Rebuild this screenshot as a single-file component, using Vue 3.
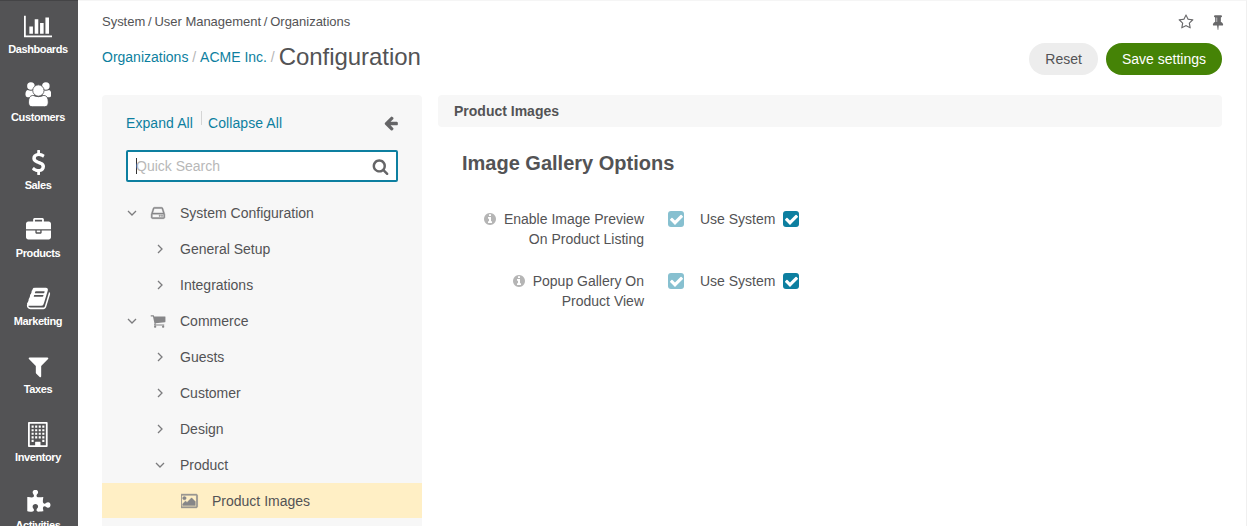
<script setup>
import { h } from 'vue'

const icons = {
  chart: { w: 2048, d: 'M640 896v512h-256v-512h256zm384-512v1024h-256v-1024h256zm1024 1152v128h-2048v-1536h128v1408h1920zm-640-896v768h-256v-768h256zm384-384v1152h-256v-1152h256z' },
  dollar: { w: 1792, d: 'M1362 1185q0 153-99.500 263.500t-258.500 136.500v175q0 14-9 23t-23 9h-135q-13 0-22.500-9.500t-9.500-22.500v-175q-66-9-127.500-31t-101.500-44.500-74-48-46.500-37.500-17.500-18q-17-21-2-41l103-135q7-10 23-12 15-2 24 9l2 2q113 99 243 125 37 8 74 8 81 0 142.500-43t61.500-122q0-28-15-53t-33.500-42-58.500-37.500-66-32-80-32.500q-39-16-61.500-25t-61.500-26.500-62.500-31-56.500-35.500-53.500-42.500-43.500-49-35.500-58-21-66.500-8.500-78q0-138 98-242t255-134v-180q0-13 9.500-22.500t22.500-9.500h135q14 0 23 9t9 23v176q57 6 110.500 23t87 33.500 63.500 37.500 39 29 15 14q17 18 5 38l-81 146q-8 15-23 16-14 3-27-7-3-3-14.500-12t-39-26.500-58.500-32-74.500-26-85.500-11.500q-95 0-155 43t-60 111q0 26 8.500 48t29.500 41.500 39.500 33 56 31 60.500 27 70 27.500q53 20 81 31.500t76 35 75.500 42.500 62 50 53 63.500 31.500 76.500 13 94z' },
  briefcase: { w: 1792, d: 'M640 256h512v-128h-512v128zm1152 640v480q0 66-47 113t-113 47h-1472q-66 0-113-47t-47-113v-480h672v160q0 26 19 45t45 19h320q26 0 45-19t19-45v-160h672zm-768 0v128h-256v-128h256zm768-480v384h-1792v-384q0-66 47-113t113-47h352v-160q0-40 28-68t68-28h576q40 0 68 28t28 68v160h352q66 0 113 47t47 113z' },
  book: { w: 1792, d: 'M1703 478q40 57 18 129l-275 906q-19 64-76.500 107.500t-122.500 43.500h-923q-77 0-148.500-53.500t-99.500-131.500q-24-67-2-127 0-4 3-27t4-37q1-8-3-21.500t-3-19.500q2-11 8-21t16.500-23.500 16.500-23.500q23-38 45-91.500t30-91.500q3-10 .5-30t-.5-28q3-11 17-28t17-23q21-36 42-92t25-90q1-9-2.500-32t.5-28q4-13 22-30.500t22-22.500q19-26 42.500-84.500t27.500-96.500q1-8-3-25.500t-2-26.500q2-8 9-18t18-23 17-21q8-12 16.500-30.500t15-35 16-36 19.500-32 26.500-23.500 36-11.500 47.500 5.500l-1 3q38-9 51-9h761q74 0 114 56t18 130l-274 906q-36 119-71.500 153.500t-128.500 34.500h-869q-27 0-38 15-11 16-1 43 24 70 144 70h923q29 0 56-15.500t35-41.500l300-987q7-22 5-57 38 15 59 43zm-1064 2q-4 13 2 22.500t20 9.500h608q13 0 25.500-9.500t16.500-22.500l21-64q4-13-2-22.500t-20-9.500h-608q-13 0-25.500 9.500t-16.500 22.500zm-83 256q-4 13 2 22.500t20 9.500h608q13 0 25.500-9.500t16.500-22.500l21-64q4-13-2-22.500t-20-9.500h-608q-13 0-25.500 9.500t-16.500 22.500z' },
  filter: { w: 1792, d: 'M1595 295q17 41-14 70l-493 493v742q0 42-39 59-13 5-25 5-27 0-45-19l-256-256q-19-19-19-45v-486l-493-493q-31-29-14-70 17-39 59-39h1280q42 0 59 39z' },
  building: { w: 1408, d: 'M64 0h1280q26 0 45 19t19 45v1664q0 26-19 45t-45 19h-1280q-26 0-45-19t-19-45v-1664q0-26 19-45t45-19zM128 128v1536h384v-224q0-32 32-32h320q32 0 32 32v224h384v-1536zM256 256h150v150h-150zM512 256h150v150h-150zM768 256h150v150h-150zM1024 256h150v150h-150zM256 512h150v150h-150zM512 512h150v150h-150zM768 512h150v150h-150zM1024 512h150v150h-150zM256 768h150v150h-150zM512 768h150v150h-150zM768 768h150v150h-150zM1024 768h150v150h-150zM256 1024h150v150h-150zM512 1024h150v150h-150zM768 1024h150v150h-150zM1024 1024h150v150h-150zM256 1280h150v150h-150zM1024 1280h150v150h-150z' },
  puzzle: { w: 1792, d: 'M1755 1083q0 81-44.500 135t-123.500 54q-41 0-77.500-17.500t-59-38-56.500-38-71-17.500q-110 0-110 124 0 39 16 115t15 115v5q-22 0-33 1-34 3-97.500 11.500t-115.500 13.500-98 5q-61 0-103-26.500t-42-83.500q0-37 17.500-71t38-56.500 38-59 17.500-77.500q0-79-54-123.500t-135-44.500q-84 0-143 45.500t-59 127.500q0 43 15 83t33.500 64.500 33.500 53 15 50.500q0 45-46 89-37 35-117 35-95 0-245-24-9-2-27.500-4t-27.500-4l-13-2q-1 0-3-1-2 0-2-1v-1024q2 1 17.500 3.500t34 5 21.500 3.500q150 24 245 24 80 0 117-35 46-44 46-89 0-22-15-50.500t-33.500-53-33.500-64.500-15-83q0-82 59-127.500t144-45.500q80 0 134 44.500t54 123.500q0 41-17.500 77.500t-38 59-38 56.500-17.500 71q0 57 42 83.500t103 26.500q64 0 180-15t163-17v2q-1 2-3.500 17.500t-5 34-3.500 21.500q-24 150-24 245 0 80 35 117 44 46 89 46 22 0 50.500-15t53-33.500 64.500-33.500 83-15q82 0 127.500 59t45.500 143z' },
  users: {
    w: 1920,
    d: 'M423 10a270 270 0 1 1 0 540a270 270 0 1 1 0-540zM1497 10a270 270 0 1 1 0 540a270 270 0 1 1 0-540zM190 580q230 110 470 0v510h-480q-150 0-150-190q0-270 160-320zM1730 580q-230 110-470 0v510h480q150 0 150-190q0-270-160-320z',
    front: 'M960 205a405 405 0 1 1 0 810a405 405 0 1 1 0-810zM560 960q400 190 800 0q310 30 310 480q0 330-260 330h-900q-260 0-260-330q0-450 310-480z',
  },
  star: { w: 1792, d: 'M1201 1004l306-297-422-62-189-382-189 382-422 62 306 297-73 421 378-199 377 199zm527-357q0 22-26 48l-363 354 86 500q1 7 1 20 0 50-41 50-19 0-40-12l-449-236-449 236q-22 12-40 12-21 0-31.500-14.500t-10.500-35.500q0-6 2-20l86-500-364-354q-25-27-25-48 0-37 56-46l502-73 225-455q19-41 49-41t49 41l225 455 502 73q56 9 56 46z' },
  pin: { w: 1792, d: 'M800 864v-448q0-14-9-23t-23-9-23 9-9 23v448q0 14 9 23t23 9 23-9 9-23zm672 352q0 26-19 45t-45 19h-429l-51 483q-2 12-10.500 20.500t-20.500 8.500h-1q-27 0-32-27l-76-485h-404q-26 0-45-19t-19-45q0-123 78.500-221.500t177.500-98.500v-512q-52 0-90-38t-38-90 38-90 90-38h640q52 0 90 38t38 90-38 90-90 38v512q99 0 177.500 98.500t78.500 221.500z' },
  search: { w: 1792, d: 'M1216 832q0-185-131.500-316.500t-316.500-131.500-316.500 131.500-131.500 316.500 131.500 316.500 316.500 131.500 316.500-131.500 131.500-316.500zm512 832q0 52-38 90t-90 38q-54 0-90-38l-343-342q-179 124-399 124-143 0-273.500-55.500t-225-150-150-225-55.500-273.500 55.500-273.500 150-225 225-150 273.500-55.500 273.500 55.500 225 150 150 225 55.500 273.500q0 220-124 399l343 343q37 37 37 90z' },
  back: { w: 1792, d: 'M1664 896v128q0 53-32.500 90.500t-84.500 37.500h-704l293 294q38 36 38 90t-38 90l-75 76q-37 37-90 37-52 0-91-37l-651-652q-37-37-37-90 0-52 37-91l651-650q38-38 91-38 52 0 90 38l75 74q38 38 38 91t-38 91l-293 293h704q52 0 84.500 37.500t32.500 90.500z' },
  info: { w: 1792, d: 'M1152 1376v-160q0-14-9-23t-23-9h-96v-512q0-14-9-23t-23-9h-320q-14 0-23 9t-9 23v160q0 14 9 23t23 9h96v320h-96q-14 0-23 9t-9 23v160q0 14 9 23t23 9h448q14 0 23-9t9-23zm-128-896v-160q0-14-9-23t-23-9h-192q-14 0-23 9t-9 23v160q0 14 9 23t23 9h192q14 0 23-9t9-23zm640 416q0 209-103 385.500t-279.500 279.500-385.500 103-385.500-103-279.500-279.500-103-385.500 103-385.500 279.500-279.500 385.500-103 385.500 103 279.500 279.500 103 385.500z' },
  cart: { w: 1792, d: 'M704 1536q0 52-38 90t-90 38-90-38-38-90 38-90 90-38 90 38 38 90zm896 0q0 52-38 90t-90 38-90-38-38-90 38-90 90-38 90 38 38 90zm128-1088v512q0 24-16.500 42.500t-40.500 21.500l-1044 122q13 60 13 70 0 16-24 64h920q26 0 45 19t19 45-19 45-45 19h-1024q-26 0-45-19t-19-45q0-11 8-31.500t16-36 21.500-40 15.500-29.500l-177-823h-204q-26 0-45-19t-19-45 19-45 45-19h256q16 0 28.500 6.500t19.500 15.500 13 24.500 8 26 5.500 29.500 4.500 26h1201q26 0 45 19t19 45z' },
  picture: { w: 1920, d: 'M576 576q0 80-56 136t-136 56-136-56-56-136 56-136 136-56 136 56 56 136zm1024 384v448h-1408v-192l320-320 160 160 512-512zm96-704h-1600q-13 0-22.500 9.500t-9.500 22.500v1216q0 13 9.500 22.500t22.500 9.500h1600q13 0 22.500-9.500t9.500-22.500v-1216q0-13-9.500-22.500t-22.500-9.500zm160 32v1216q0 66-47 113t-113 47h-1600q-66 0-113-47t-47-113v-1216q0-66 47-113t113-47h1600q66 0 113 47t47 113z', weight: 50 },
  drive: { w: 1792, d: 'M1168 1216q0 33-23.500 56.500t-56.500 23.500-56.500-23.500-23.500-56.500 23.500-56.500 56.500-23.500 56.500 23.500 23.500 56.500zm256 0q0 33-23.500 56.500t-56.500 23.500-56.500-23.500-23.500-56.500 23.500-56.500 56.500-23.500 56.500 23.500 23.500 56.500zm112 160v-320q0-13-9.500-22.500t-22.500-9.500h-1216q-13 0-22.500 9.500t-9.500 22.500v320q0 13 9.500 22.500t22.500 9.500h1216q13 0 22.500-9.500t9.500-22.500zm-1230-480h1180l-157-482q-4-13-16-21.500t-26-8.500h-782q-14 0-26 8.500t-16 21.500zm1358 160v320q0 66-47 113t-113 47h-1216q-66 0-113-47t-47-113v-320q0-25 16-75l197-606q17-53 63-86t101-33h782q55 0 101 33t63 86l197 606q16 50 16 75z', weight: 50 },
  check: { w: 1792, d: 'M1671 566q0 40-28 68l-724 724-136 136q-28 28-68 28t-68-28l-136-136-362-362q-28-28-28-68t28-68l136-136q28-28 68-28t68 28l294 295 656-657q28-28 68-28t68 28l136 136q28 28 28 68z' },
}

const Icon = ({ name, size }) => {
  const icon = icons[name]
  const paths = [h('path', { d: icon.d, stroke: 'currentColor', 'stroke-width': icon.weight || 0 })]
  if (icon.front) {
    paths.push(h('path', { d: icon.front, stroke: '#535355', 'stroke-width': 60 }))
  }
  return h('svg', {
    viewBox: `0 0 ${icon.w} 1792`,
    width: (icon.w / 1792) * size,
    height: size,
    fill: 'currentColor',
    'fill-rule': name === 'building' ? 'evenodd' : 'nonzero',
    'aria-hidden': 'true',
  }, paths)
}
Icon.props = ['name', 'size']

const nav = [
  ['chart', 'Dashboards'],
  ['users', 'Customers'],
  ['dollar', 'Sales'],
  ['briefcase', 'Products'],
  ['book', 'Marketing'],
  ['filter', 'Taxes'],
  ['building', 'Inventory'],
  ['puzzle', 'Activities'],
]

const tree = [
  { label: 'System Configuration', level: 0, open: true, icon: 'drive' },
  { label: 'General Setup', level: 1 },
  { label: 'Integrations', level: 1 },
  { label: 'Commerce', level: 0, open: true, icon: 'cart' },
  { label: 'Guests', level: 1 },
  { label: 'Customer', level: 1 },
  { label: 'Design', level: 1 },
  { label: 'Product', level: 1, open: true },
  { label: 'Product Images', level: 2, icon: 'picture', leaf: true },
]

const options = [
  ['Enable Image Preview', 'On Product Listing'],
  ['Popup Gallery On', 'Product View'],
]
</script>

<template>
  <div class="page">
    <nav class="side">
      <a v-for="[icon, label] in nav" :key="label" class="side-item">
        <span class="side-icon"><Icon :name="icon" :size="25" /></span>
        <span class="side-label">{{ label }}</span>
      </a>
    </nav>

    <main class="main">
      <header class="head">
        <div class="head-left">
          <div class="crumbs">
            <span>System</span><i>/</i><span>User Management</span><i>/</i><span>Organizations</span>
          </div>
          <div class="title">
            <a>Organizations</a><i>/</i><a>ACME Inc.</a><i>/</i><h1>Configuration</h1>
          </div>
        </div>
        <div class="head-right">
          <div class="marks">
            <Icon name="star" :size="16" />
            <Icon name="pin" :size="16" />
          </div>
          <div class="buttons">
            <button class="btn">Reset</button>
            <button class="btn primary">Save settings</button>
          </div>
        </div>
      </header>

      <div class="content">
        <aside class="tree">
          <div class="tree-actions">
            <a>Expand All</a><span class="sep"></span><a>Collapse All</a>
            <Icon class="back" name="back" :size="16" />
          </div>
          <div class="search">
            <span class="caret"></span>
            <span class="placeholder">Quick Search</span>
            <Icon name="search" :size="17" />
          </div>
          <div v-for="n in tree" :key="n.label" class="node" :class="['level' + n.level, { active: n.leaf }]">
            <span v-if="!n.leaf" class="chevron">
              <svg width="10" height="10" viewBox="0 0 10 10" fill="none" stroke="currentColor" stroke-width="1.3">
                <path :d="n.open ? 'M1 3l4 4 4-4' : 'M3 1l4 4-4 4'" />
              </svg>
            </span>
            <span v-if="n.icon" class="node-icon"><Icon :name="n.icon" :size="16" /></span>
            <span>{{ n.label }}</span>
          </div>
        </aside>

        <section class="settings">
          <div class="section-bar">Product Images</div>
          <h2>Image Gallery Options</h2>
          <div v-for="lines in options" :key="lines[0]" class="option">
            <div class="option-label">
              <div class="line"><Icon name="info" :size="14" />{{ lines[0] }}</div>
              <div class="line">{{ lines[1] }}</div>
            </div>
            <span class="box disabled"><Icon name="check" :size="15" /></span>
            <span class="use">Use System</span>
            <span class="box"><Icon name="check" :size="15" /></span>
          </div>
        </section>
      </div>
    </main>
  </div>
</template>

<style>
body {
  margin: 0;
  overflow: hidden;
}
</style>

<style scoped>
* {
  box-sizing: border-box;
}
.page {
  display: flex;
  width: 100%;
  height: 526px;
  overflow: hidden;
  background: #fff;
  color: #535355;
  font: 14px/20px "Liberation Sans", Arial, sans-serif;
}
svg {
  display: block;
  flex: none;
}
.side {
  flex: none;
  width: 78px;
  padding-right: 2px;
  background: #535355;
  color: #fff;
  box-shadow: inset 0 1px #444446;
}
.side-item {
  display: flex;
  flex-direction: column;
  align-items: center;
  height: 68px;
  padding-top: 14px;
}
.side-icon {
  height: 28px;
}
.side-label {
  height: 14px;
  font-size: 11px;
  line-height: 14px;
  font-weight: 700;
  letter-spacing: -0.4px;
  white-space: nowrap;
}
.main {
  flex: 1;
  min-width: 0;
  padding: 0 24px;
  border-top: 1px solid #f5f5f5;
  border-right: 1px solid #f0f0f0;
}
.head {
  display: flex;
  justify-content: space-between;
  height: 94px;
}
.crumbs {
  display: flex;
  padding-top: 11px;
  font-size: 13px;
  line-height: 20px;
  letter-spacing: -0.02px;
}
.crumbs i {
  font-style: normal;
  margin: 0 2.8px;
}
.title {
  display: flex;
  height: 30px;
  margin-top: 10px;
  line-height: 30px;
}
.title a,
.tree-actions a {
  color: #0d7fa0;
}
.title i {
  margin: 0 3.9px;
  color: #b5b5b5;
  font-style: normal;
}
h1 {
  margin: 0;
  font-size: 24px;
  line-height: 30px;
  font-weight: 400;
  letter-spacing: -0.04px;
}
.head-right {
  display: flex;
  flex-direction: column;
  align-items: flex-end;
}
.marks {
  display: flex;
  gap: 16px;
  padding: 13px 0 0;
  margin-right: -4px;
  color: #68686a;
}
.buttons {
  display: flex;
  gap: 8px;
  margin-top: 13px;
}
.btn {
  height: 32px;
  padding: 0 16px;
  border: 0;
  border-radius: 16px;
  background: #ededed;
  color: #535355;
  font: inherit;
}
.btn.primary {
  background: #458306;
  color: #fff;
}
.content {
  display: flex;
  gap: 16px;
}
.tree {
  flex: none;
  width: 320px;
  height: 440px;
  border-radius: 4px;
  background: #f7f7f7;
}
.tree-actions {
  display: flex;
  align-items: center;
  height: 40px;
  margin: 8px 24px 7px;
  letter-spacing: 0.08px;
}
.sep {
  align-self: flex-start;
  width: 1px;
  height: 14px;
  margin: 8px 6px 0 8px;
  background: #d5d5d5;
}
.back {
  margin: 0 -1px 0 auto;
  color: #656567;
}
.search {
  display: flex;
  align-items: center;
  height: 32px;
  margin: 0 24px 13px;
  padding: 0 7px 0 8px;
  border: 2px solid #0d7fa0;
  border-radius: 2px;
  background: #fff;
}
.caret {
  width: 1px;
  height: 16px;
  background: #333;
}
.placeholder {
  flex: 1;
  margin-left: -1px;
  color: #b8b8b8;
}
.search svg {
  color: #656567;
}
.node {
  display: flex;
  align-items: center;
  height: 36px;
  padding-left: 25px;
}
.node.level1 {
  padding-left: 53px;
}
.node.level1 .chevron {
  margin-right: 15px;
}
.node.level2 {
  height: 35px;
  padding-left: 79px;
}
.node.active {
  background: #ffefc5;
}
.chevron {
  width: 10px;
  color: #7c7c7e;
}
.node-icon {
  display: flex;
  justify-content: center;
  width: 18px;
  margin: 0 13px 0 12px;
  color: #868688;
}
.level2 .node-icon {
  margin: 0 13px 0 0;
}
.settings {
  flex: 1;
}
.section-bar {
  height: 32px;
  padding-left: 16px;
  border-radius: 4px;
  background: #f7f7f7;
  font-weight: 700;
  line-height: 32px;
}
h2 {
  margin: 21px 0 31px 24px;
  font-size: 20px;
  line-height: 30px;
  font-weight: 700;
}
.option {
  display: flex;
  height: 62px;
}
.option-label {
  width: 206px;
  margin-right: 24px;
}
.line {
  display: flex;
  justify-content: flex-end;
  align-items: center;
  height: 20px;
}
.line svg {
  margin-right: 7px;
  color: #b5b5b5;
}
.box {
  display: flex;
  align-items: center;
  justify-content: center;
  width: 16px;
  height: 16px;
  margin-top: 2px;
  border-radius: 3px;
  background: #0d7fa0;
  color: #fff;
}
.box.disabled {
  background: #87c0d0;
}
.use {
  margin: 0 8px 0 16px;
}
</style>
